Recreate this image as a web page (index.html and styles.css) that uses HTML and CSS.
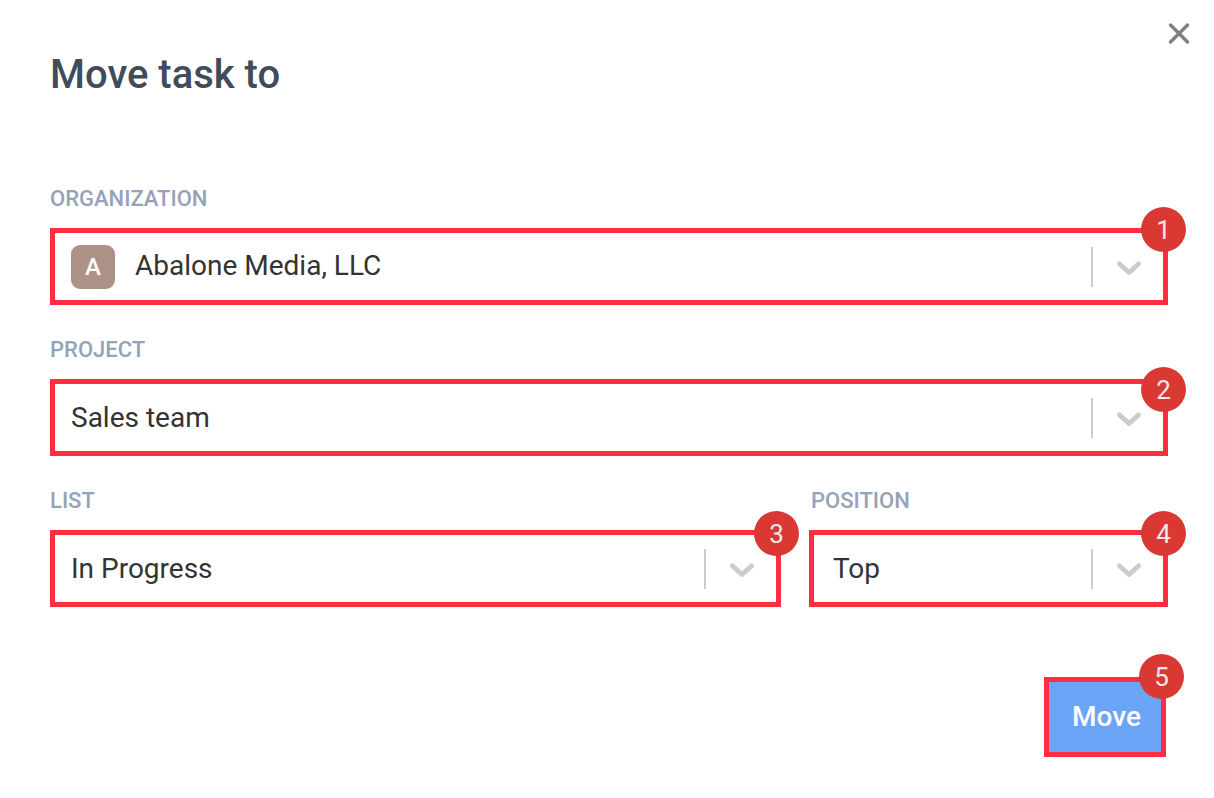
FILE: index.html
```html
<!DOCTYPE html>
<html lang="en">
<head>
    <meta charset="UTF-8">
    <meta name="viewport" content="width=device-width, initial-scale=1.0">
    <title>Move task to</title>
    <link rel="stylesheet" href="styles.css">
</head>
<body>
    <main class="modal">
        <button type="button" class="close-button" aria-label="Close">
            <svg width="24" height="24" viewBox="0 0 24 24"><path d="M3.5 4L20.5 21M20.5 4L3.5 21"/></svg>
        </button>
        <h1>Move task to</h1>

        <form class="move-form">
            <div class="form-group">
                <label for="organization">ORGANIZATION</label>
                <div class="select-box">
                    <span class="avatar">A</span>
                    <select id="organization" class="with-avatar">
                        <option>Abalone Media, LLC</option>
                    </select>
                    <span class="indicator">
                        <svg width="40" height="40" viewBox="0 0 40 40"><path d="M10.5 17L20 25.5L29.5 17"/></svg>
                    </span>
                    <span class="step step-1">1</span>
                </div>
            </div>

            <div class="form-group">
                <label for="project">PROJECT</label>
                <div class="select-box">
                    <select id="project">
                        <option>Sales team</option>
                    </select>
                    <span class="indicator">
                        <svg width="40" height="40" viewBox="0 0 40 40"><path d="M10.5 17L20 25.5L29.5 17"/></svg>
                    </span>
                    <span class="step step-2">2</span>
                </div>
            </div>

            <div class="form-row">
                <div class="form-group list-group">
                    <label for="list">LIST</label>
                    <div class="select-box">
                        <select id="list">
                            <option>In Progress</option>
                        </select>
                        <span class="indicator">
                            <svg width="40" height="40" viewBox="0 0 40 40"><path d="M10.5 17L20 25.5L29.5 17"/></svg>
                        </span>
                        <span class="step step-3">3</span>
                    </div>
                </div>
                <div class="form-group position-group">
                    <label for="position">POSITION</label>
                    <div class="select-box">
                        <select id="position">
                            <option>Top</option>
                        </select>
                        <span class="indicator">
                            <svg width="40" height="40" viewBox="0 0 40 40"><path d="M10.5 17L20 25.5L29.5 17"/></svg>
                        </span>
                        <span class="step step-4">4</span>
                    </div>
                </div>
            </div>

            <div class="form-actions">
                <div class="button-box">
                    <button type="submit" class="move-button">Move</button>
                    <span class="step step-5">5</span>
                </div>
            </div>
        </form>
    </main>
</body>
</html>
```

FILE: styles.css
```css
* {
    margin: 0;
    padding: 0;
    box-sizing: border-box;
    font-family: Roboto, sans-serif;
}

body {
    background-color: #fff;
    color: #333;
}

.modal {
    position: relative;
    padding: 51px 46px 40px 50px;
}

.close-button {
    position: absolute;
    top: 21px;
    right: 23px;
    width: 24px;
    height: 24px;
    border: none;
    background: none;
    cursor: pointer;
}

.close-button svg {
    display: block;
    fill: none;
    stroke: #808080;
    stroke-width: 3.5;
    stroke-linecap: round;
}

h1 {
    font-size: 40px;
    line-height: 48px;
    font-weight: 500;
    color: #414b5a;
    margin-bottom: 87px;
}

.form-group {
    margin-bottom: 32px;
}

.form-group label {
    display: block;
    font-size: 22px;
    line-height: 26px;
    font-weight: 500;
    color: #94a3b8;
    margin-bottom: 16px;
}

.form-row {
    display: flex;
    gap: 28px;
}

.list-group {
    flex: 731;
}

.position-group {
    flex: 359;
}

.position-group label {
    padding-left: 2px;
}

/* Select fields */
.select-box {
    position: relative;
    display: flex;
    align-items: center;
    height: 77px;
    border: 5px solid #ff2d3f;
}

.select-box select {
    flex: 1;
    min-width: 0;
    height: 100%;
    padding: 0 90px 1px 16px;
    border: none;
    outline: none;
    appearance: none;
    background: none;
    color: #333;
    font-size: 28px;
    cursor: pointer;
}

.select-box select.with-avatar {
    padding-left: 20px;
    padding-bottom: 3px;
}

.position-group .select-box select {
    padding-left: 19px;
}

.avatar {
    width: 44px;
    height: 44px;
    margin-left: 16px;
    border-radius: 9px;
    background-color: #ac9187;
    color: #fff;
    font-size: 24px;
    line-height: 44px;
    font-weight: 500;
    text-align: center;
}

.indicator {
    position: absolute;
    right: 14px;
    height: 40px;
    padding-left: 16px;
    border-left: 2px solid #ccc;
    pointer-events: none;
}

.indicator svg {
    display: block;
    fill: none;
    stroke: #ccc;
    stroke-width: 5;
    stroke-linecap: round;
    stroke-linejoin: round;
}

/* Numbered steps */
.step {
    position: absolute;
    right: -23px;
    width: 45px;
    height: 45px;
    border-radius: 50%;
    background-color: #da3832;
    color: #f0e8ea;
    font-size: 26px;
    line-height: 46px;
    text-align: center;
}

.step-1 {
    top: -26px;
}

.step-2 {
    top: -17px;
}

.step-3,
.step-4 {
    top: -24px;
}

.step-5 {
    top: -28px;
}

.form-actions {
    display: flex;
    justify-content: flex-end;
    padding: 38px 2px 0 0;
}

.button-box {
    position: relative;
    border: 5px solid #ff2d3f;
}

.move-button {
    display: block;
    height: 70px;
    padding: 0 20px 2px 23px;
    border: none;
    background-color: #6aa5f7;
    color: #fff;
    font-size: 28px;
    font-weight: 500;
    cursor: pointer;
}
```
